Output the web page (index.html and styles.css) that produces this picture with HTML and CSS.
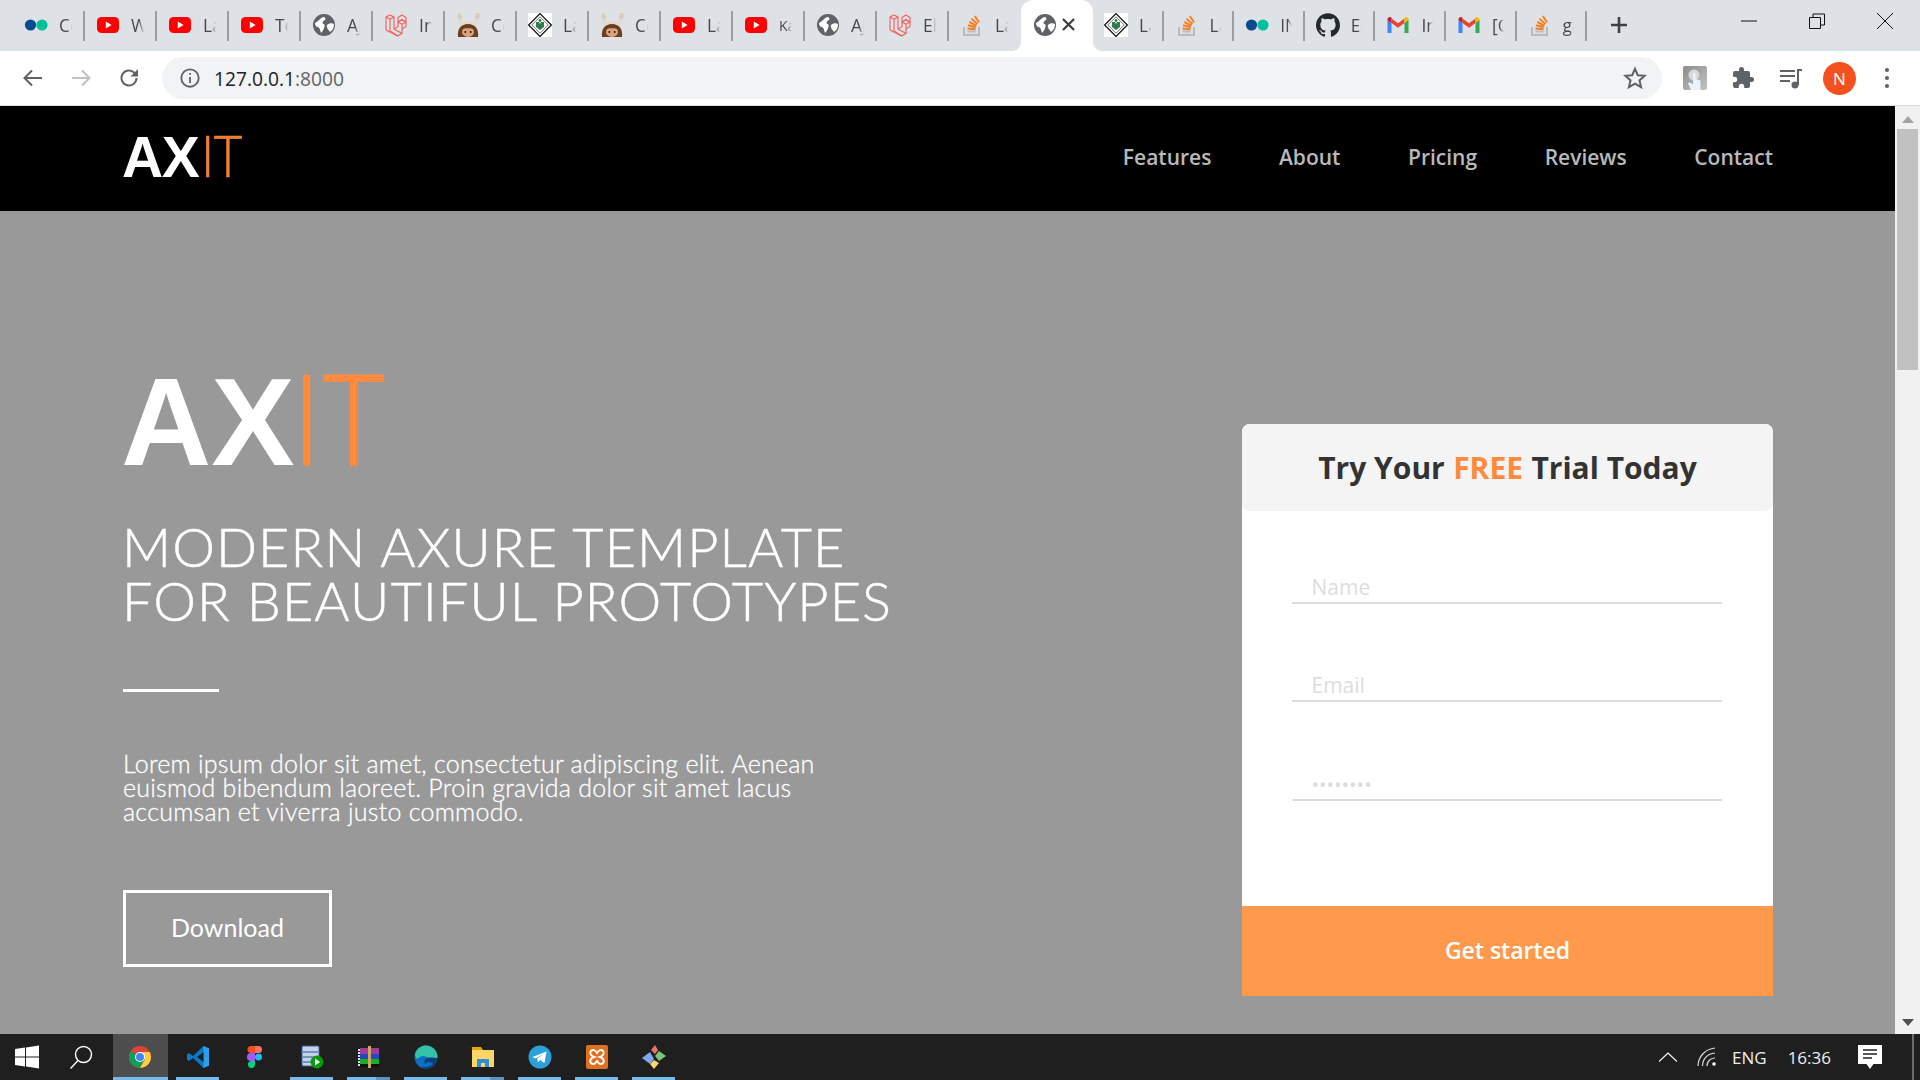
FILE: index.html
```html
<!DOCTYPE html>
<html lang="en">
<head>
<meta charset="utf-8">
<title>AXIT</title>
<link rel="stylesheet" href="styles.css">
</head>
<body>
<svg class="defs" xmlns="http://www.w3.org/2000/svg">
  <symbol id="flickr" viewBox="0 0 24 24"><circle cx="6.5" cy="12" r="5.6" fill="#0a4a8e"/><circle cx="18" cy="12" r="5.6" fill="#00c29a"/></symbol>
  <symbol id="yt" viewBox="0 0 24 24"><rect x="1" y="4" width="22" height="16" rx="4.5" fill="#f00"/><path d="M9.8 8.6 15.6 12l-5.8 3.4z" fill="#fff"/></symbol>
  <symbol id="globe" viewBox="0 0 24 24"><circle cx="12" cy="12" r="11" fill="#5f6368"/><path d="M3 10c3-1 5-5 8-6 2 0 3 1 2 3-2 1-3 2-2 4 2 0 2 2 1 4-1 3-2 4-3 5-1-3-1-5-3-6-2 0-3-2-3-4zM15 12c2-2 5-2 7-1 0 3-1 6-4 8-1-2-4-4-3-7z" fill="#fff"/></symbol>
  <symbol id="laravel" viewBox="0 0 24 24"><g fill="none" stroke="#f0605a" stroke-width="1.1" stroke-linejoin="round"><path d="M2 4 6 2l4 2v12l8 4.500-4.500 2.500L2 17z"/><path d="M2 4l4 2.200L10 4M6 6.200V18l8 5M10 16l4-2.400V9l4-2.300 4 2.300v4.600l-4 2.400v4.500"/><path d="M14 9l4 2.200 4-2.200M18 11.200v4.600M14 4.500 18 2l4 2.500V9l-4-2.300L14 9z"/></g></symbol>
  <symbol id="cat" viewBox="0 0 24 24"><path d="M6 13 3 6M18 13l3-7" stroke="#e3dccd" stroke-width="4" fill="none"/><path d="M1 3l2-3 2 1 1 5-3 1zM19 6l1-6 3 0 1 4-2 3z" fill="#d5cdbd"/><path d="M8 8h8l-1 5H9z" fill="#e3dccd"/><path d="M2 24c-1-8 3-13 10-13s11 5 10 13z" fill="#6b3e20"/><ellipse cx="12" cy="19" rx="6" ry="5" fill="#dba37c"/><path d="M5 16c3-3 11-3 14 0-3-1-11-1-14 0z" fill="#6b3e20"/><circle cx="9.300" cy="19" r="1" fill="#2a1a10"/><circle cx="14.700" cy="19" r="1" fill="#2a1a10"/></symbol>
  <symbol id="diamond" viewBox="0 0 24 24"><rect width="24" height="24" fill="#fff"/><path d="M12 .6 23.400 12 12 23.400.6 12z" fill="#fff" stroke="#111" stroke-width="1.300"/><path d="M12 3.800 20.200 12 12 20.200 3.800 12z" fill="none" stroke="#333" stroke-width=".7"/><path d="M8 9h3l1 2 1-2h3v5l-4 3-4-3z" fill="#2e7d4f"/><circle cx="12" cy="7.500" r="1.400" fill="#2e7d4f"/></symbol>
  <symbol id="so" viewBox="0 0 24 24"><path d="M4 14v8h15v-8" fill="none" stroke="#bcbbbb" stroke-width="2"/><path d="M7.500 18.500h8" stroke="#bcbbbb" stroke-width="2"/><path d="M7.500 15.500l8 .7M8 12.300l7.800 2M9.300 9l7.200 3.700M11.500 5.800l6 5.200M14.800 3l4.300 6.300" stroke="#f48024" stroke-width="2" fill="none"/></symbol>
  <symbol id="github" viewBox="0 0 24 24"><path fill="#24292e" d="M12 .297c-6.630 0-12 5.373-12 12 0 5.303 3.438 9.800 8.205 11.385.6.113.82-.258.82-.577 0-.285-.01-1.040-.015-2.040-3.338.724-4.042-1.610-4.042-1.610C4.422 18.070 3.633 17.700 3.633 17.700c-1.087-.744.084-.729.084-.729 1.205.084 1.838 1.236 1.838 1.236 1.070 1.835 2.809 1.305 3.495.998.108-.776.417-1.305.76-1.605-2.665-.3-5.466-1.332-5.466-5.930 0-1.310.465-2.380 1.235-3.220-.135-.303-.54-1.523.105-3.176 0 0 1.005-.322 3.300 1.230.96-.267 1.980-.399 3-.405 1.020.006 2.040.138 3 .405 2.280-1.552 3.285-1.230 3.285-1.230.645 1.653.24 2.873.12 3.176.765.84 1.230 1.910 1.230 3.220 0 4.610-2.805 5.625-5.475 5.920.42.36.81 1.096.81 2.220 0 1.606-.015 2.896-.015 3.286 0 .315.21.69.825.57C20.565 22.092 24 17.592 24 12.297c0-6.627-5.373-12-12-12"/></symbol>
  <symbol id="gmail" viewBox="0 0 24 24"><path d="M1.500 20V6.500L5.500 9.500V20z" fill="#4285f4"/><path d="M18.500 20V9.500l4-3V20z" fill="#34a853"/><path d="M5.500 10 12 14.800 18.500 10V5.500L12 10.300 5.500 5.500z" fill="#ea4335"/><path d="M1.500 7V6.300c0-2 2.400-3 4-1.800V10z" fill="#c5221f"/><path d="M18.500 10V4.500c1.600-1.200 4-.2 4 1.800V7z" fill="#fbbc04"/></symbol>
</svg>

<header class="tabstrip">
  <div class="tab"><svg class="ic"><use href="#flickr"/></svg><span class="tab-title">Co</span></div>
  <div class="tab"><svg class="ic"><use href="#yt"/></svg><span class="tab-title">W</span></div>
  <div class="tab"><svg class="ic"><use href="#yt"/></svg><span class="tab-title">La</span></div>
  <div class="tab"><svg class="ic"><use href="#yt"/></svg><span class="tab-title">To</span></div>
  <div class="tab"><svg class="ic"><use href="#globe"/></svg><span class="tab-title">AJ</span></div>
  <div class="tab"><svg class="ic"><use href="#laravel"/></svg><span class="tab-title">In</span></div>
  <div class="tab"><svg class="ic"><use href="#cat"/></svg><span class="tab-title">Co</span></div>
  <div class="tab"><svg class="ic"><use href="#diamond"/></svg><span class="tab-title">La</span></div>
  <div class="tab"><svg class="ic"><use href="#cat"/></svg><span class="tab-title">Co</span></div>
  <div class="tab"><svg class="ic"><use href="#yt"/></svg><span class="tab-title">La</span></div>
  <div class="tab"><svg class="ic"><use href="#yt"/></svg><span class="tab-title tab-small">Ka</span></div>
  <div class="tab"><svg class="ic"><use href="#globe"/></svg><span class="tab-title">AJ</span></div>
  <div class="tab"><svg class="ic"><use href="#laravel"/></svg><span class="tab-title">El</span></div>
  <div class="tab no-sep"><svg class="ic"><use href="#so"/></svg><span class="tab-title">La</span></div>
  <div class="tab tab-active"><svg class="ic"><use href="#globe"/></svg><svg class="tab-close" viewBox="0 0 14 14"><path d="M1 1l12 12M13 1 1 13"/></svg></div>
  <div class="tab tab-tight"><svg class="ic"><use href="#diamond"/></svg><span class="tab-title">La</span></div>
  <div class="tab tab-tight"><svg class="ic"><use href="#so"/></svg><span class="tab-title">La</span></div>
  <div class="tab tab-tight"><svg class="ic"><use href="#flickr"/></svg><span class="tab-title">IN</span></div>
  <div class="tab tab-tight"><svg class="ic"><use href="#github"/></svg><span class="tab-title">Ec</span></div>
  <div class="tab tab-tight"><svg class="ic"><use href="#gmail"/></svg><span class="tab-title">In</span></div>
  <div class="tab tab-tight"><svg class="ic"><use href="#gmail"/></svg><span class="tab-title">[C</span></div>
  <div class="tab tab-tight"><svg class="ic"><use href="#so"/></svg><span class="tab-title">gi</span></div>
  <svg class="new-tab" viewBox="0 0 18 18"><path d="M9 1v16M1 9h16"/></svg>
  <div class="window-controls">
    <svg class="win-btn" viewBox="0 0 16 16"><path d="M0 8h16"/></svg>
    <svg class="win-btn" viewBox="0 0 16 16"><path d="M.5 4.500h11v11H.5zM4 4.500V1h11.500v11H11.500"/></svg>
    <svg class="win-btn" viewBox="0 0 16 16"><path d="M0 0l16 16M16 0 0 16"/></svg>
  </div>
</header>

<div class="toolbar">
  <svg class="tool tool-back" viewBox="0 0 24 24"><path d="M21 12H4M11 4.500 3.500 12l7.500 7.500"/></svg>
  <svg class="tool tool-forward" viewBox="0 0 24 24"><path d="M3 12h17M13 4.500l7.500 7.500-7.500 7.500"/></svg>
  <svg class="tool tool-reload" viewBox="0 0 24 24"><path d="M19.500 12a7.500 7.500 0 1 1-2.200-5.300L20 9.500"/><path class="solid" d="M21 3v7.500h-7.500z"/></svg>
  <div class="omnibox">
    <svg class="tool-info" viewBox="0 0 24 24"><circle cx="12" cy="12" r="9.500"/><path d="M12 11v6.500M12 6.500v2"/></svg>
    <span class="url">127.0.0.1<span class="url-port">:8000</span></span>
    <svg class="star" viewBox="0 0 24 24"><path d="M12 2.800l2.800 6.400 6.900.6-5.200 4.600 1.600 6.800-6.100-3.600-6.100 3.600 1.600-6.800-5.200-4.600 6.900-.6z"/></svg>
  </div>
  <div class="toolbar-actions">
    <svg class="act" viewBox="0 0 24 24"><defs><linearGradient id="handbg" x1="0" y1="0" x2="1" y2="1"><stop offset="0" stop-color="#8b8b8b"/><stop offset="1" stop-color="#c4c4c4"/></linearGradient></defs><rect width="24" height="24" rx="2" fill="url(#handbg)"/><circle cx="11" cy="9" r="5.500" fill="#d8d8d8"/><path d="M10 7h2.500v6l5 1.500V24H8l-3-7 2-.5 3 2z" fill="#eaf3fb"/></svg>
    <svg class="act" viewBox="0 0 24 24"><path fill="#5f6368" d="M20.500 11H19V7a2 2 0 0 0-2-2h-4V3.500a2.500 2.500 0 0 0-5 0V5H4a2 2 0 0 0-2 2v3.800h1.500a2.700 2.700 0 0 1 0 5.400H2V20a2 2 0 0 0 2 2h3.800v-1.500a2.700 2.700 0 0 1 5.400 0V22H17a2 2 0 0 0 2-2v-4h1.500a2.500 2.500 0 0 0 0-5z"/></svg>
    <svg class="act" viewBox="0 0 24 24"><path fill="none" stroke="#5f6368" stroke-width="2" d="M1 5h15M1 10h15M1 15h10"/><path fill="none" stroke="#5f6368" stroke-width="2" d="M19 19V4h4"/><circle cx="16" cy="19" r="3.500" fill="#5f6368"/></svg>
    <div class="avatar">N</div>
    <svg class="dots" viewBox="0 0 6 24"><circle cx="3" cy="4" r="2.100"/><circle cx="3" cy="12" r="2.100"/><circle cx="3" cy="20" r="2.100"/></svg>
  </div>
</div>

<div class="viewport">
  <main class="page">
    <nav class="nav">
      <div class="logo logo-small"><span class="logo-ax">AX</span><span class="logo-it">IT</span></div>
      <ul class="nav-links">
        <li>Features</li>
        <li>About</li>
        <li>Pricing</li>
        <li>Reviews</li>
        <li>Contact</li>
      </ul>
    </nav>
    <section class="hero">
      <div class="hero-copy">
        <div class="logo logo-large"><span class="logo-ax">AX</span><span class="logo-it">IT</span></div>
        <h1 class="headline">MODERN AXURE TEMPLATE<br>FOR BEAUTIFUL PROTOTYPES</h1>
        <div class="rule"></div>
        <p class="lede">Lorem ipsum dolor sit amet, consectetur adipiscing elit. Aenean<br>euismod bibendum laoreet. Proin gravida dolor sit amet lacus<br>accumsan et viverra justo commodo.</p>
        <a class="download">Download</a>
      </div>
      <form class="card">
        <h2 class="card-title">Try Your <span class="free">FREE</span> Trial Today</h2>
        <div class="fields">
          <input class="field" type="text" placeholder="Name">
          <input class="field" type="text" placeholder="Email">
          <input class="field field-pass" type="text" placeholder="••••••••">
        </div>
        <div class="submit">Get started</div>
      </form>
    </section>
  </main>
  <aside class="scrollbar">
    <div class="sb-arrow sb-up"></div>
    <div class="sb-thumb"></div>
    <div class="sb-arrow sb-down"></div>
  </aside>
</div>

<footer class="taskbar">
  <svg class="start" viewBox="0 0 24 24"><path d="M0 4l10-1.400V11.500H0zM11 2.400 24 .5v11H11zM0 12.500h10v9L0 20zM11 12.500h13V23.500L11 21.600z" fill="#fff"/></svg>
  <svg class="search" viewBox="0 0 24 24"><circle cx="14.500" cy="9.500" r="8"/><path d="M9 15.500 1.500 23.500"/></svg>
  <div class="task task-active">
    <svg class="task-ic" viewBox="0 0 24 24"><circle cx="12" cy="12" r="11" fill="#db4437"/><path d="M2.500 6.500A11 11 0 0 0 12 23l5.500-9.500z" fill="#0f9d58"/><path d="M12 7h9.800A11 11 0 0 1 12 23l5-9z" fill="#ffcd40"/><circle cx="12" cy="12" r="5" fill="#fff"/><circle cx="12" cy="12" r="4" fill="#4285f4"/></svg>
  </div>
  <div class="task task-on">
    <svg class="task-ic" viewBox="0 0 24 24"><path d="M17.500 1 23 3.500v17L17.500 23 7 13l-4 3-2-1.200V9.200L3 8l4 3z" fill="#0a78c6"/><path d="M17.500 1 23 3.500v17L17.500 23z" fill="#2aa0ea"/><path d="M17.500 7 11 12l6.500 5z" fill="#1f1f1f"/></svg>
  </div>
  <div class="task">
    <svg class="task-ic" viewBox="0 0 24 24"><circle cx="15.500" cy="12" r="3.500" fill="#1abcfe"/><path d="M12 1H8a3.500 3.500 0 0 0 0 7h4z" fill="#f24e1e"/><path d="M12 1h3.500a3.500 3.500 0 0 1 0 7H12z" fill="#ff7262"/><path d="M12 8H8a3.500 3.500 0 0 0 0 8h4z" fill="#a259ff"/><path d="M12 16H8a3.500 3.500 0 1 0 4 3.500z" fill="#0acf83"/></svg>
  </div>
  <div class="task task-on">
    <svg class="task-ic" viewBox="0 0 24 24"><rect x="2" y="1" width="17" height="20" rx="1" fill="#c4d3ea" stroke="#3d5f96"/><path d="M3 7h15M3 12h15M3 17h8" stroke="#5a7fb8" stroke-width="1.500"/><circle cx="17" cy="17" r="6.500" fill="#0a9a0a"/><path d="M15 13.500l5 3.500-5 3.500z" fill="#fff"/></svg>
  </div>
  <div class="task task-on task-split">
    <svg class="task-ic" viewBox="0 0 24 24"><rect x="3" y="3" width="19" height="6" fill="#a03c96"/><rect x="3" y="9" width="19" height="5" fill="#2346c8"/><rect x="3" y="14" width="19" height="5" fill="#14b41e"/><rect x="3" y="19" width="19" height="3" fill="#111"/><path d="M11 1h3v22h-3z" fill="#c9a860"/><path d="M2 4v18" stroke="#ddd" stroke-width="2" stroke-dasharray="2 1"/></svg>
  </div>
  <div class="task task-on">
    <svg class="task-ic" viewBox="0 0 24 24"><circle cx="12" cy="12" r="11.500" fill="#0c6fc4"/><path d="M1 9C3 2 9 .5 12 .5c6 0 11.500 5 11.500 11 0 3-3 3-6 2.500-3-.5-5-3-8-3-3 0-5 2-6 3C2 13 1 11 1 9z" fill="#35c1a5"/><path d="M23.500 13c-1 6-6 10.500-11.500 10.500-2 0-3-1-4-2 5 1 9 0 11-3-1-1-6-3-6.500-1-.5 2 .5 2-1.500 1-2-2 .5-6 5-6 3 0 6 .5 7.500.5z" fill="#0a3f78"/></svg>
  </div>
  <div class="task task-on task-split">
    <svg class="task-ic" viewBox="0 0 24 24"><path d="M1 2h9l2 3H1z" fill="#e8a50a"/><rect x="1" y="5" width="22" height="17" fill="#ffd766"/><path d="M6 22v-8h12v8h-4v-4h-4v4z" fill="#2f8fd8"/></svg>
  </div>
  <div class="task task-on">
    <svg class="task-ic" viewBox="0 0 24 24"><circle cx="12" cy="12" r="11.500" fill="#2aa1da"/><path d="M4.500 12 18.500 6.500 16.500 18l-4.500-3-2 2.500-.8-4L15.500 9l-8 4.500z" fill="#fff"/></svg>
  </div>
  <div class="task task-on">
    <svg class="task-ic" viewBox="0 0 24 24"><rect x="1" y="0" width="22" height="24" rx="2" fill="#e1701f"/><path d="M6 6c2-2 4-1 6 2 2-3 4-4 6-2 2 2 0 5-3 6 3 1 5 4 3 6-2 2-4 1-6-2-2 3-4 4-6 2-2-2 0-5 3-6-3-1-5-4-3-6z" fill="none" stroke="#fff" stroke-width="2"/></svg>
  </div>
  <div class="task task-on">
    <svg class="task-ic" viewBox="0 0 24 24"><path d="M8 7 0 13l8 6 4-5z" fill="#7ea8f2"/><path d="M13 0 9 5l4 4 3-4z" fill="#e8736e"/><path d="M17 6l-4 5 4 5 7-5z" fill="#7cc576"/><path d="M8 19l4-4 5 3-5 6z" fill="#f5d76e"/></svg>
  </div>
  <div class="tray">
    <svg class="tray-chevron" viewBox="0 0 18 10"><path d="M0 9.500 9 1l9 8.500"/></svg>
    <svg class="tray-wifi" viewBox="0 0 20 20"><path d="M1 19C1 10 8 2 18 1M5.500 19c0-7 5-12.500 12.500-13M10 19c0-4 3-8 8-8"/><circle class="dot" cx="17" cy="17" r="1.800"/></svg>
    <span class="tray-text tray-lang">ENG</span>
    <span class="tray-text tray-time">16:36</span>
    <svg class="tray-note" viewBox="0 0 24 24"><path d="M0 0h24v19h-8.500L12 24l-3.500-5H0z" fill="#fff"/><path d="M5 5h14M5 9h14M5 13h9" stroke="#1f1f1f" stroke-width="1.300"/></svg>
    <div class="tray-edge"></div>
  </div>
</footer>
</body>
</html>
```

FILE: styles.css
```css
* { box-sizing: border-box; }
html, body { margin: 0; height: 100%; }
body {
  width: 1920px;
  height: 1080px;
  overflow: hidden;
  display: flex;
  flex-direction: column;
  font-family: "Open Sans", sans-serif;
  background: #fff;
}
.defs { display: block; width: 0; height: 0; }

/* tab strip */
.tabstrip {
  height: 51px;
  flex: none;
  background: #dee1e6;
  display: flex;
  align-items: flex-start;
  padding-left: 13px;
}
.tab {
  flex: none;
  width: 72px;
  height: 30px;
  margin-top: 11px;
  padding: 0 11px 2px 11px;
  display: flex;
  align-items: center;
  gap: 11px;
  border-right: 2px solid #9b9ea2;
  position: relative;
}
.tab-tight { width: 70.6px; }
.no-sep { border-right-color: transparent; }
.tab-active {
  height: 51px;
  margin-top: 0;
  background: #fff;
  border-right: 0;
  border-radius: 12px 12px 0 0;
  padding-left: 12px;
  gap: 5px;
}
.tab-active::before,
.tab-active::after {
  content: "";
  position: absolute;
  bottom: 0;
  width: 10px;
  height: 10px;
}
.tab-active::before { left: -10px; background: radial-gradient(circle at 0 0, transparent 10px, #fff 10.500px); }
.tab-active::after { right: -10px; background: radial-gradient(circle at 100% 0, transparent 10px, #fff 10.500px); }
.ic { flex: none; width: 24px; height: 24px; }
.tab-close { width: 13px; height: 13px; flex: none; fill: none; stroke: #3c4043; stroke-width: 2.400; }
.tab-title {
  flex: 1;
  min-width: 0;
  overflow: hidden;
  white-space: nowrap;
  font-size: 17.500px;
  color: #45484c;
  -webkit-mask-image: linear-gradient(90deg, #000 60%, transparent);
  mask-image: linear-gradient(90deg, #000 60%, transparent);
}
.tab-small { font-size: 14px; }
.new-tab { width: 18px; height: 18px; margin: 16px 0 0 23px; fill: none; stroke: #3c4043; stroke-width: 2.600; flex: none; }
.window-controls {
  margin-left: auto;
  display: flex;
  gap: 52px;
  padding: 13px 27px 0 0;
}
.win-btn { width: 16px; height: 16px; fill: none; stroke: #111; stroke-width: 1; }

/* toolbar */
.toolbar {
  height: 55px;
  flex: none;
  background: #fff;
  border-bottom: 1px solid #dadce0;
  display: flex;
  align-items: center;
  padding: 0 0 0 21px;
}
.tool { width: 24px; height: 24px; fill: none; stroke-width: 2; flex: none; }
.tool-back { stroke: #5f6368; }
.tool-forward { stroke: #bdc1c6; margin-left: 24px; }
.tool-reload { stroke: #5f6368; margin-left: 24px; }
.tool-reload .solid { fill: #5f6368; stroke: none; }
.omnibox {
  width: 1500px;
  height: 42px;
  margin-left: 21px;
  background: #f1f3f4;
  border-radius: 21px;
  display: flex;
  align-items: center;
  padding: 0 15px 0 17px;
}
.tool-info { width: 22px; height: 22px; fill: none; stroke: #5f6368; stroke-width: 2; flex: none; }
.url { margin-left: 13px; font-size: 19.200px; color: #202124; }
.url-port { color: #5f6368; }
.star { width: 24px; height: 24px; margin-left: auto; fill: none; stroke: #5f6368; stroke-width: 2; }
.toolbar-actions {
  display: flex;
  align-items: center;
  padding-left: 21px;
  gap: 24px;
}
.act { width: 24px; height: 24px; flex: none; }
.avatar {
  width: 33px;
  height: 33px;
  margin-left: -4px;
  border-radius: 50%;
  background: #f4511e;
  color: #fff;
  font-size: 17px;
  display: flex;
  align-items: center;
  justify-content: center;
}
.dots { width: 6px; height: 24px; margin-left: 4px; fill: #5f6368; }

/* page */
.viewport { flex: 1; min-height: 0; display: flex; }
.page { flex: 1; min-width: 0; display: flex; flex-direction: column; background: #999; }
.nav {
  height: 105px;
  flex: none;
  background: #000;
  display: flex;
  align-items: center;
  justify-content: space-between;
  padding: 0 122px 3px 122px;
}
.nav-links {
  list-style: none;
  margin: 0;
  padding: 0;
  display: flex;
  gap: 67.600px;
  font-size: 21px;
  font-weight: 600;
  color: #b9b9b9;
}
.logo { display: flex; align-items: baseline; }
.logo-ax { font-family: "Liberation Sans", Arial, sans-serif; font-weight: 700; color: #fff; }
.logo-it {
  display: block;
  font-family: "Open Sans", sans-serif;
  font-weight: 300;
  color: #ff8a3d;
  transform-origin: left center;
  transform: scaleX(.93);
}
.logo-small { font-size: 57px; line-height: 41px; margin-bottom: 2px; }
.logo-small .logo-ax { letter-spacing: -1.500px; }
.logo-small .logo-it { margin-left: 3px; letter-spacing: -.5px; color: #f08030; -webkit-text-stroke: .6px #f08030; }
.logo-large { font-size: 125px; line-height: 88px; margin-left: -2px; }
.logo-large .logo-it { margin-left: -3px; letter-spacing: 2.200px; -webkit-text-stroke: 1.500px #ff8a3d; }

.hero {
  flex: 1;
  min-height: 0;
  display: flex;
  justify-content: space-between;
  align-items: flex-start;
  padding: 0 122px 0 123px;
}
.hero-copy { padding-top: 162px; color: #fff; }
.headline {
  margin: 54px 0 0 -1px;
  font-family: Lato, sans-serif;
  font-weight: 300;
  font-size: 54px;
  line-height: 54px;
  letter-spacing: 1.100px;
  -webkit-text-stroke: .5px #fff;
}
.rule { width: 96px; height: 3px; margin-top: 61px; background: #fff; }
.lede {
  margin: 59px 0 0;
  font-family: Lato, sans-serif;
  font-weight: 300;
  font-size: 25px;
  line-height: 24.200px;
  letter-spacing: .25px;
  -webkit-text-stroke: .3px #fff;
}
.download {
  display: flex;
  align-items: center;
  justify-content: center;
  width: 209px;
  height: 77px;
  margin-top: 66px;
  padding-bottom: 2px;
  border: 3px solid #fff;
  font-family: Lato, sans-serif;
  font-weight: 400;
  font-size: 25px;
  color: #fff;
}

/* card */
.card {
  width: 531px;
  height: 572px;
  margin-top: 213px;
  background: #fff;
  border-radius: 8px 8px 0 0;
  display: flex;
  flex-direction: column;
}
.card-title {
  margin: 0;
  height: 87px;
  flex: none;
  background: #f4f4f4;
  border-radius: 8px;
  display: flex;
  align-items: center;
  justify-content: center;
  gap: .28em;
  font-size: 30px;
  font-weight: 700;
  color: #333;
}
.free { color: #ff8a3d; }
.fields {
  flex: 1;
  display: flex;
  flex-direction: column;
  gap: 58px;
  padding: 53px 51px 0 50px;
}
.field {
  display: block;
  width: 100%;
  height: 40px;
  border: 0;
  border-bottom: 2px solid #ddd;
  outline: 0;
  background: transparent;
  padding: 8px 0 0 19.500px;
  font-family: "Open Sans", sans-serif;
  font-size: 21px;
}
.field::placeholder { color: #ddd; opacity: 1; }
.field-pass { font-size: 20px; padding-top: 10px; margin-top: .500px; }
.submit {
  height: 90px;
  flex: none;
  background: #ff9a4d;
  color: #fff;
  font-size: 23px;
  font-weight: 600;
  padding-bottom: 3px;
  display: flex;
  align-items: center;
  justify-content: center;
}

/* scrollbar */
.scrollbar {
  width: 25px;
  flex: none;
  background: #f1f1f1;
  display: flex;
  flex-direction: column;
  align-items: center;
  padding-top: 10px;
}
.sb-thumb { width: 21px; height: 241px; margin-top: 6px; background: #c1c1c1; }
.sb-arrow { width: 0; height: 0; border-left: 6px solid transparent; border-right: 6px solid transparent; }
.sb-up { border-bottom: 7px solid #a3a3a3; }
.sb-down { border-top: 7px solid #505050; margin-top: auto; margin-bottom: 8px; }

/* taskbar */
.taskbar {
  height: 46px;
  flex: none;
  background: #1f1f1f;
  display: flex;
  align-items: stretch;
  padding-left: 15px;
}
.start { width: 24px; height: 24px; align-self: center; flex: none; }
.search { width: 24px; height: 24px; align-self: center; margin: 0 20px 0 30px; fill: none; stroke: #fff; stroke-width: 1.400; flex: none; }
.task {
  flex: none;
  width: 43px;
  margin-right: 14px;
  display: flex;
  align-items: center;
  justify-content: center;
  border-bottom: 3px solid transparent;
  padding-top: 2px;
}
.task-on { border-bottom-color: #76b9ed; }
.task-split { border-image: linear-gradient(90deg, #76b9ed 67%, #5b94c0 67%) 1; }
.task-active {
  width: 55px;
  margin-right: 8px;
  padding-right: 1px;
  background: #4d4d4d;
  border-bottom-color: #76b9ed;
}
.task-ic { width: 24px; height: 24px; }
.tray {
  margin-left: auto;
  display: flex;
  align-items: center;
  color: #fff;
}
.tray-chevron { width: 18px; height: 10px; fill: none; stroke: #fff; stroke-width: 1.200; flex: none; }
.tray-wifi { width: 20px; height: 20px; margin-left: 20px; fill: none; stroke: #ddd; stroke-width: 1.200; flex: none; }
.tray-wifi .dot { fill: #fff; stroke: none; }
.tray-text { font-size: 17px; color: #eee; }
.tray-lang { margin-left: 15px; }
.tray-time { margin-left: 21px; }
.tray-note { width: 24px; height: 24px; margin-left: 27px; flex: none; }
.tray-edge { width: 2px; height: 100%; margin-left: 30px; margin-right: 6px; background: #6b6b6b; }
```
